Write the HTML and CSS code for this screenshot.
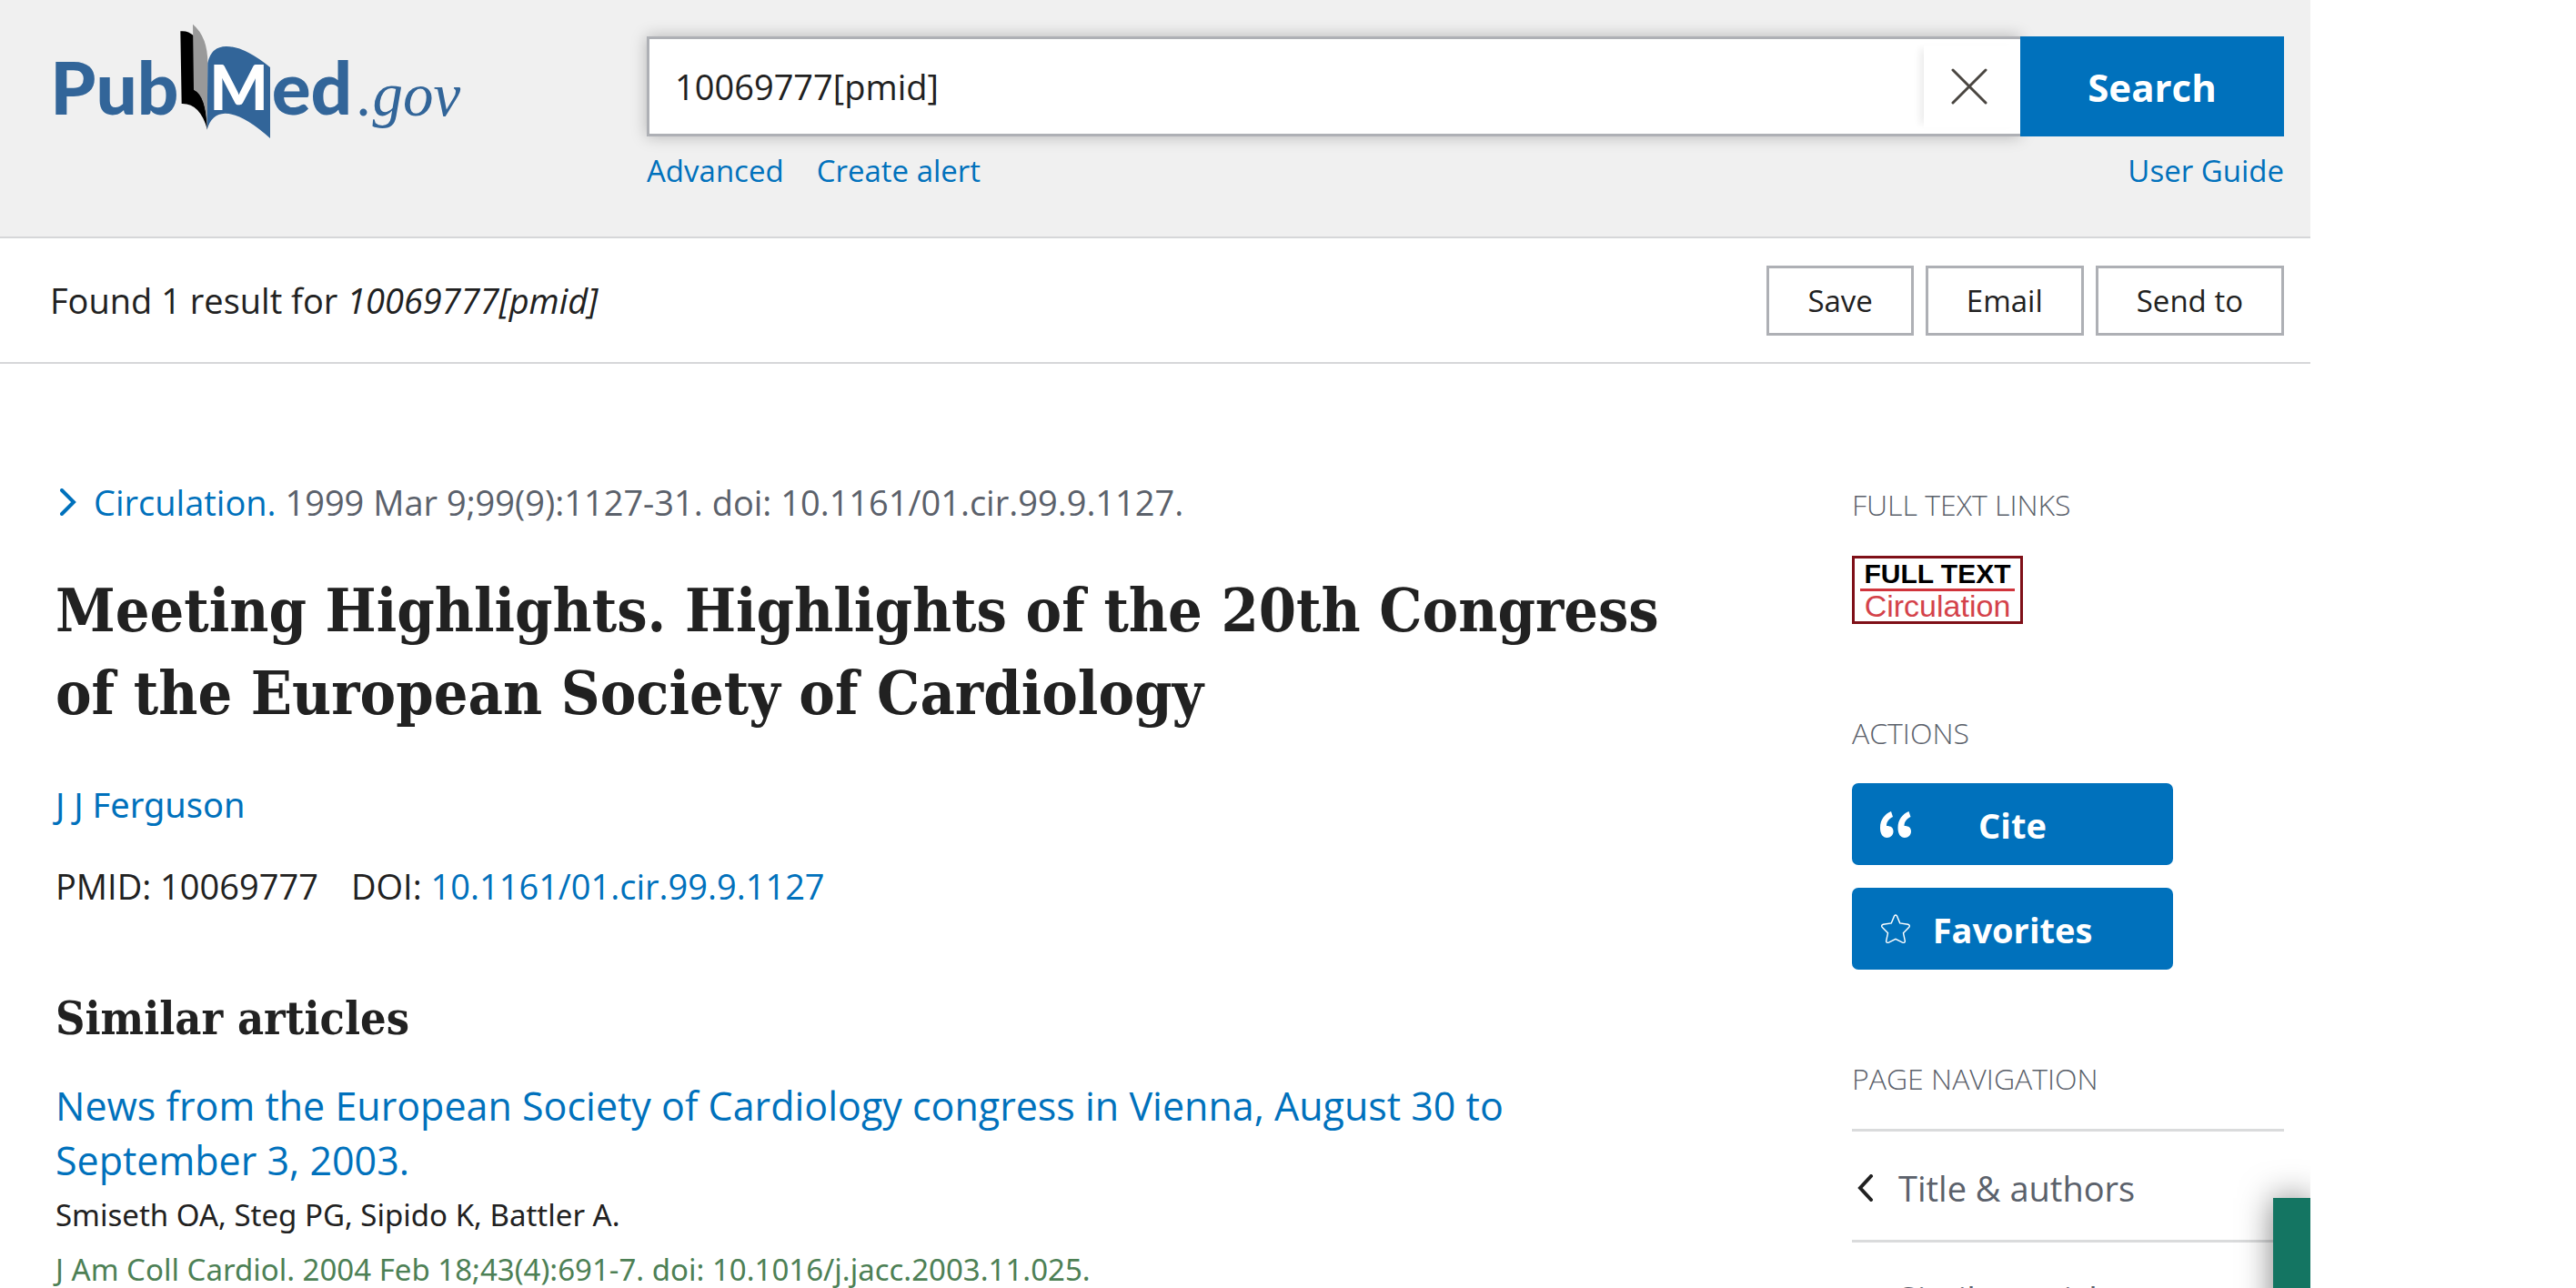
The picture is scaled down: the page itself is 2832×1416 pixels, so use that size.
FILE: index.html
```html
<!DOCTYPE html>
<html lang="en">
<head>
<meta charset="utf-8">
<title>Meeting Highlights - PubMed</title>
<link rel="stylesheet" href="styles.css">
</head>
<body>
<div class="page">
  <header class="header">
    <a class="logo" href="#" aria-label="PubMed.gov">
      <svg viewBox="60 48 1350 384" role="img">
        <text class="logo-word" x="46" y="348">Pub</text>
        <path d="M475 73Q500 70 519 88L521 266Q560 280 564 398Q540 310 479 312Z" fill="#000"/>
        <path d="M516 50Q566 92 565 180L563 395Q560 285 519 266Z" fill="#999"/>
        <path d="M565 178Q576 123 627 123Q685 123 771 192V426Q680 344 622 344Q577 346 563 397Z" fill="#326599"/>
        <text class="logo-m" x="571" y="332">M</text>
        <text class="logo-word" x="776" y="348">ed</text>
        <text class="logo-gov" x="1058" y="350">.gov</text>
      </svg>
    </a>
    <div class="search-area">
      <form class="search">
        <div class="search-box">
          <input class="search-input" type="text" value="10069777[pmid]" aria-label="Search term">
          <button class="clear" type="button" aria-label="Clear search input">
            <svg viewBox="0 0 40 40"><path d="M2 2L38 38M38 2L2 38"/></svg>
          </button>
        </div>
        <button class="search-button" type="submit">Search</button>
      </form>
      <nav class="search-links">
        <a href="#">Advanced</a>
        <a href="#">Create alert</a>
        <a class="guide" href="#">User Guide</a>
      </nav>
    </div>
  </header>

  <div class="toolbar">
    <p class="found">Found 1 result for <em>10069777[pmid]</em></p>
    <div class="tools">
      <button type="button">Save</button>
      <button type="button">Email</button>
      <button type="button">Send to</button>
    </div>
  </div>

  <div class="content">
    <main class="article">
      <p class="citation">
        <svg class="chevron" viewBox="0 0 18 30"><path d="M2 2L15 15L2 28"/></svg>
        <span><a href="#">Circulation.</a> 1999 Mar 9;99(9):1127-31. doi: 10.1161/01.cir.99.9.1127.</span>
      </p>
      <h1>Meeting Highlights. Highlights of the 20th Congress of the European Society of Cardiology</h1>
      <p class="authors"><a href="#">J J Ferguson</a></p>
      <p class="ids"><span>PMID: 10069777</span><span>DOI: <a href="#">10.1161/01.cir.99.9.1127</a></span></p>
      <section class="similar">
        <h2>Similar articles</h2>
        <a class="similar-title" href="#">News from the European Society of Cardiology congress in Vienna, August 30 to September 3, 2003.</a>
        <p class="similar-authors">Smiseth OA, Steg PG, Sipido K, Battler A.</p>
        <p class="similar-source">J Am Coll Cardiol. 2004 Feb 18;43(4):691-7. doi: 10.1016/j.jacc.2003.11.025.</p>
      </section>
    </main>

    <aside class="sidebar">
      <section class="links">
        <h3>Full text links</h3>
        <a class="badge" href="#"><span class="badge-top">FULL TEXT</span><span class="badge-name">Circulation</span></a>
      </section>
      <section class="actions">
        <h3>Actions</h3>
        <button type="button">
          <svg viewBox="0 0 34 30"><path d="M12 1C5 4 0 10 0 19C0 26 3 30 7.500 30C11.500 30 14.500 27 14.500 23C14.500 19 12 17 7 17C7 12 10 9 14 7ZM31.500 1C24.500 4 19.500 10 19.500 19C19.500 26 22.500 30 27 30C31 30 34 27 34 23C34 19 31.500 17 26.500 17C26.500 12 29.500 9 33.500 7Z" fill="#fff"/></svg>
          Cite
        </button>
        <button type="button">
          <svg viewBox="0 0 34 34"><path d="M15.500 2Q17 0 18.500 2L22 10.500L31.500 12Q34.500 13 32.500 15.500L26 22L28 31.500Q28 34 25 33L17 29L9 33Q6 34 6 31.500L8 22L1.500 15.500Q-.5 13 2.500 12L12 10.500Z" fill="none" stroke="#fff" stroke-width="1.500"/></svg>
          Favorites
        </button>
      </section>
      <nav class="page-nav">
        <h3>Page navigation</h3>
        <ul>
          <li><a href="#"><svg class="chevron" viewBox="0 0 18 30"><path d="M15 2L3 15L15 28"/></svg>Title &amp; authors</a></li>
          <li><a href="#"><span class="chevron"></span>Similar articles</a></li>
        </ul>
      </nav>
    </aside>
  </div>
  <button class="feedback" type="button" aria-label="Feedback"></button>
</div>
</body>
</html>
```
FILE: styles.css
```css
* { box-sizing: border-box; }

body {
  margin: 0;
  padding-right: 292px;
  height: 100vh;
  overflow: hidden;
  background: #fff;
  color: #212121;
  font-family: "Open Sans", "Noto Sans", sans-serif;
  font-size: 38px;
  line-height: 60px;
}

p, h1, h2, h3, ul { margin: 0; padding: 0; }
a { color: #0071bc; text-decoration: none; }
button, input { font: inherit; color: inherit; border: 0; margin: 0; padding: 0; }
svg { display: block; }

.page { position: relative; height: 100vh; overflow: hidden; }

.header {
  display: grid;
  grid-template-columns: 651px 1fr;
  padding: 26px 29px 0 60px;
  height: 262px;
  background: #f0f0f0;
  border-bottom: 2px solid #d6d7d9;
}
.logo svg { width: 450px; height: 128px; overflow: visible; }
.logo-word { font: 900 240px Lato, sans-serif; fill: #326599; }
.logo-m { font: 900 204px Lato, sans-serif; fill: #fff; }
.logo-gov { font: italic 201px "Liberation Serif", serif; fill: #326599; }

.search-area { padding-top: 14px; }
.search { display: flex; height: 110px; }
.search-box {
  display: flex;
  flex: 1;
  align-items: center;
  background: #fff;
  border: 3px solid #aeb0b5;
  border-right: 0;
  box-shadow: 0 0 16px rgba(0, 0, 0, .25);
}
.search-input {
  flex: 1;
  min-width: 0;
  padding-left: 28px;
  background: none;
  outline: 0;
}
.clear {
  display: grid;
  place-items: center;
  width: 106px;
  height: 90px;
  padding-right: 6px;
  background: #fff;
  box-shadow: -8px 0 8px -4px rgba(0, 0, 0, .08);
}
.clear svg { width: 40px; height: 40px; fill: none; stroke: #4a4641; stroke-width: 3; stroke-linecap: round; }
.search-button {
  position: relative;
  width: 290px;
  padding-top: 2px;
  background: #0071bc;
  color: #fff;
  font-size: 42px;
  font-weight: 700;
}
.search-links { display: flex; gap: 36px; padding-top: 8px; font-size: 33px; }
.guide { margin-left: auto; }

.toolbar {
  display: flex;
  justify-content: space-between;
  align-items: center;
  height: 138px;
  padding: 0 29px 0 55px;
  border-bottom: 2px solid #d6d7d9;
}
.tools { display: flex; gap: 13px; font-size: 33px; }
.tools button { height: 77px; padding: 2px 42px 0; background: #fff; border: 3px solid #aeb0b5; }

.content {
  display: grid;
  grid-template-columns: minmax(0, 1fr) 475px;
  gap: 190px;
  padding: 122px 29px 0 61px;
}
.chevron { width: 18px; height: 30px; flex: none; fill: none; stroke: #212121; stroke-width: 4; stroke-linecap: round; }

.citation { display: flex; align-items: center; gap: 19px; padding-left: 5px; color: #5b616b; }
.citation .chevron { stroke: #0071bc; }
h1, h2 { font-family: "DejaVu Serif Condensed", "DejaVu Serif", serif; font-stretch: condensed; font-weight: 700; }
h1 { margin-top: 44px; font-size: 66px; line-height: 91px; }
.authors { margin-top: 46px; }
.authors, .similar-authors, .similar-source { font-family: "Noto Sans", "Open Sans", sans-serif; }
.ids { display: flex; gap: 36px; margin-top: 30px; }
h2 { margin-top: 86px; font-size: 50px; line-height: 60px; }
.similar-title { display: block; margin-top: 36px; font-size: 43px; }
.similar-authors, .similar-source { font-size: 33px; }
.similar-source { color: #4d8055; }

.sidebar { padding-top: 3px; }
h3 { font-size: 32px; font-weight: 300; line-height: 60px; color: #5b616b; text-transform: uppercase; }
.badge {
  display: block;
  width: 188px;
  height: 75px;
  margin-top: 26px;
  padding: 0 6px;
  border: 3px solid #7f1018;
  font-family: "Liberation Sans", sans-serif;
  text-align: center;
}
.badge span { display: block; }
.badge-top { border-bottom: 3px solid #d0343c; color: #000; font-size: 30px; font-weight: 700; line-height: 33px; }
.badge-name { color: #d4424a; font-size: 34px; line-height: 32px; }
.actions { margin-top: 90px; }
.actions h3 { margin-bottom: 25px; }
.actions button {
  position: relative;
  display: block;
  width: 353px;
  height: 90px;
  margin-bottom: 25px;
  padding-top: 2px;
  border-radius: 7px;
  background: #0071bc;
  color: #fff;
  font-weight: 700;
}
.actions svg { position: absolute; left: 31px; top: 29px; width: 34px; height: 32px; }
.page-nav { margin-top: 90px; }
.page-nav ul { margin-top: 25px; list-style: none; color: #5b616b; }
.page-nav li { height: 122px; border-top: 3px solid #dadbdc; }
.page-nav a { display: flex; align-items: center; gap: 27px; height: 119px; padding: 5px 0 0 6px; color: #5b616b; }

.feedback {
  position: absolute;
  right: 0;
  top: 1317px;
  width: 41px;
  height: 260px;
  background: #147562;
  box-shadow: 0 0 36px rgba(0, 0, 0, .5);
}
```
